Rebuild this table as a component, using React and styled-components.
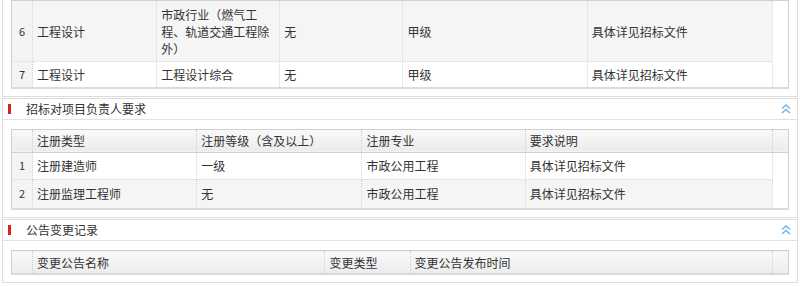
import React from 'react';
import styled, { createGlobalStyle } from 'styled-components';

const GlobalStyle = createGlobalStyle`
  html, body {
    margin: 0;
    padding: 0;
    background: #fff;
  }
  body {
    font-family: "Microsoft YaHei", "Noto Sans CJK SC", "Noto Sans", sans-serif;
    font-size: 12px;
    color: #333;
  }
`;

const qualifications = [
  { no: 6, type: '工程设计', trade: '市政行业（燃气工程、轨道交通工程除外）', sub: '无', level: '甲级', note: '具体详见招标文件' },
  { no: 7, type: '工程设计', trade: '工程设计综合', sub: '无', level: '甲级', note: '具体详见招标文件' },
];

const managers = [
  { no: 1, type: '注册建造师', level: '一级', major: '市政公用工程', note: '具体详见招标文件' },
  { no: 2, type: '注册监理工程师', level: '无', major: '市政公用工程', note: '具体详见招标文件' },
];

const ChevronUp = () => (
  <svg width="10" height="10" viewBox="0 0 10 10" fill="none" stroke="#6fb2ea" strokeWidth="1.4">
    <path d="M1 4.5 L5 1 L9 4.5" />
    <path d="M1 9 L5 5.5 L9 9" />
  </svg>
);

const Section = ({ title, cut, children }) => (
  <Panel $cut={cut}>
    {title && (
      <PanelHead>
        <Mark />
        <PanelTitle>{title}</PanelTitle>
        <Toggle>
          <ChevronUp />
        </Toggle>
      </PanelHead>
    )}
    <PanelBody $cut={cut}>{children}</PanelBody>
  </Panel>
);

const Grid = ({ cols, head, rows, rowHeight, striped = 'even' }) => (
  <GridTable>
    <colgroup>
      {cols.map((w, i) => (
        <col key={i} style={{ width: w }} />
      ))}
      <col style={{ width: 16 }} />
    </colgroup>
    {head && (
      <thead>
        <tr>
          <HeadCell />
          {head.map((h) => (
            <HeadCell key={h}>{h}</HeadCell>
          ))}
          <HeadCell />
        </tr>
      </thead>
    )}
    <tbody>
      {rows.map((r, i) => (
        <Row key={r[0]} $alt={striped === 'even' ? i % 2 === 1 : i % 2 === 0} $h={r.h || rowHeight}>
          <NumCell>{r[0]}</NumCell>
          {r.slice(1).map((c, j) => (
            <Cell key={j}>{c}</Cell>
          ))}
          <Gutter />
        </Row>
      ))}
    </tbody>
  </GridTable>
);

const App = () => {
  const qRows = qualifications.map((q) => [q.no, q.type, q.trade, q.sub, q.level, q.note]);
  qRows[0].h = 61;
  const mRows = managers.map((m) => [m.no, m.type, m.level, m.major, m.note]);
  mRows[1].h = 30;

  return (
    <Page>
      <GlobalStyle />
      <Section cut>
        <Grid cols={[21, 124, 123, 123, 184, 185]} rows={qRows} rowHeight={26} striped="odd" />
      </Section>
      <Section title="招标对项目负责人要求">
        <Grid
          cols={[21, 164, 165, 163, 247]}
          head={['注册类型', '注册等级（含及以上）', '注册专业', '要求说明']}
          rows={mRows}
          rowHeight={27}
        />
      </Section>
      <Section title="公告变更记录">
        <Grid cols={[21, 292, 85, 362]} head={['变更公告名称', '变更类型', '变更公告发布时间']} rows={[]} />
      </Section>
    </Page>
  );
};

const Page = styled.div`
  display: flex;
  flex-direction: column;
  gap: 1px;
  padding: 0 2px;
`;

const Panel = styled.section`
  border: 1px solid #dcdcdc;
  border-top-width: ${(p) => (p.$cut ? 0 : 1)}px;
  background: #fff;
`;

const PanelHead = styled.div`
  display: flex;
  align-items: center;
  height: 20px;
  padding: 0 6px 0 5px;
  border-bottom: 1px solid #e2e2e2;
`;

const Mark = styled.span`
  width: 3px;
  height: 10px;
  background: #d8241c;
  margin-right: 15px;
`;

const PanelTitle = styled.h3`
  flex: 1;
  margin: 0;
  font-size: 12px;
  font-weight: normal;
  color: #333;
  line-height: 20px;
`;

const Toggle = styled.span`
  display: flex;
  align-items: center;
  width: 10px;
  height: 10px;
`;

const PanelBody = styled.div`
  padding: ${(p) => (p.$cut ? '0 7px 7px 8px' : '9px 7px 7px 8px')};
`;

const GridTable = styled.table`
  width: 778px;
  table-layout: fixed;
  border-collapse: collapse;
  border: 1px solid #d0d0d0;
  border-bottom-width: 2px;
  border-bottom-color: #dadada;
  font-size: 12px;
  color: #333;
`;

const HeadCell = styled.th`
  height: 22px;
  padding: 0 4px;
  text-align: left;
  font-weight: normal;
  white-space: nowrap;
  background: linear-gradient(to bottom, #f9f9f9 0%, #ececec 100%);
  border-right: 1px dotted #cfcfcf;
  border-bottom: 1px solid #d0d0d0;
  &:last-child {
    border-right: 0;
  }
`;

const Row = styled.tr`
  height: ${(p) => p.$h}px;
  background: ${(p) => (p.$alt ? '#f5f5f5' : '#fff')};
`;

const Cell = styled.td`
  padding: 0 4px;
  line-height: 17px;
  border-right: 1px dotted #d6d6d6;
  border-bottom: 1px dotted #d6d6d6;
  word-break: break-all;
`;

const NumCell = styled(Cell)`
  padding: 0;
  text-align: center;
  font-size: 11px;
  background: #f4f4f4;
`;

const Gutter = styled.td`
  background: #fff;
  border-bottom: 0;
`;

export default App;
